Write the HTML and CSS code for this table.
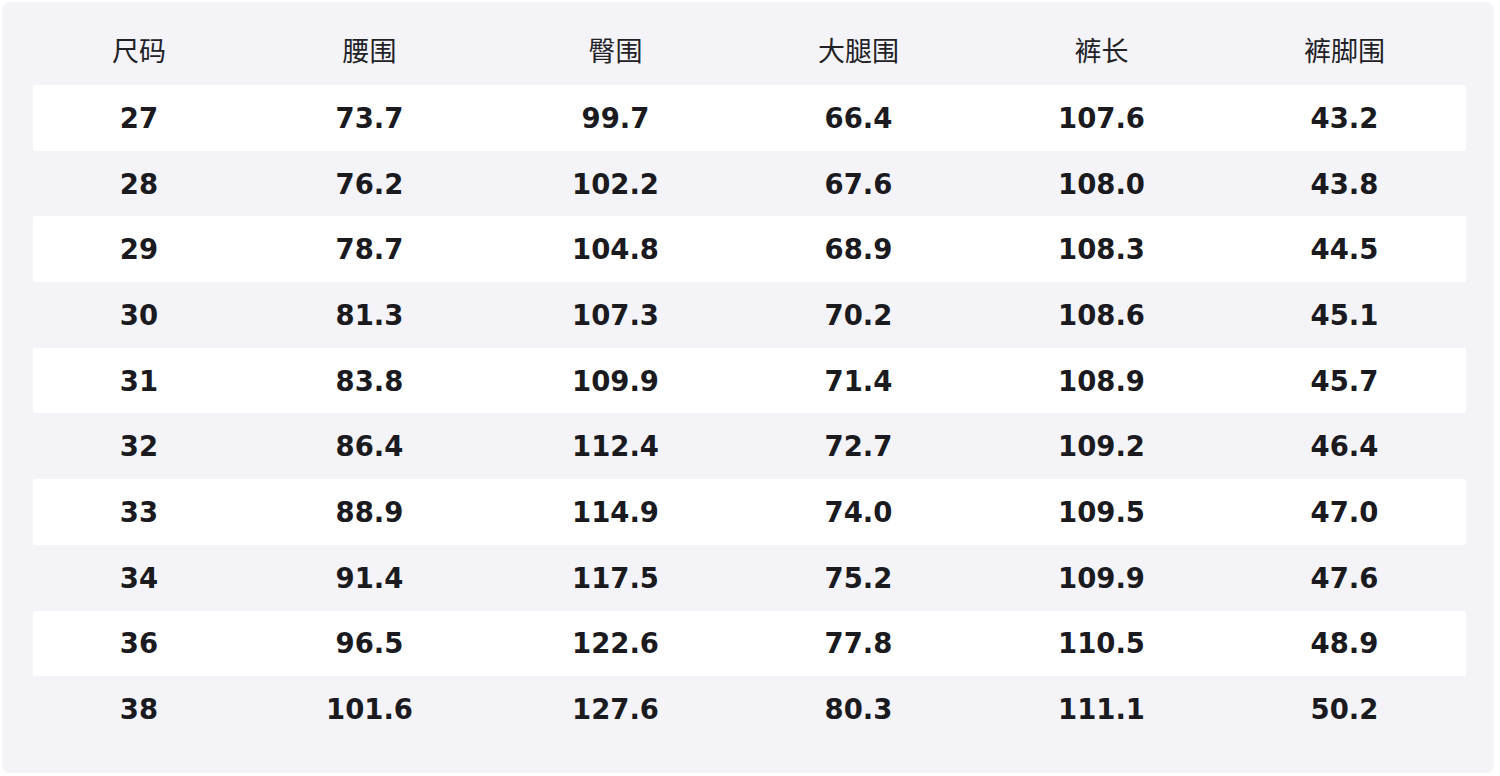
FILE: index.html
```html
<!DOCTYPE html>
<html lang="zh">
<head>
<meta charset="utf-8">
<link rel="stylesheet" href="styles.css">
</head>
<body>
<div class="panel">
  <div class="table">
    <div class="row head"><div>尺码</div><div>腰围</div><div>臀围</div><div>大腿围</div><div>裤长</div><div>裤脚围</div></div>
    <div class="row odd"><div>27</div><div>73.7</div><div>99.7</div><div>66.4</div><div>107.6</div><div>43.2</div></div>
    <div class="row"><div>28</div><div>76.2</div><div>102.2</div><div>67.6</div><div>108.0</div><div>43.8</div></div>
    <div class="row odd"><div>29</div><div>78.7</div><div>104.8</div><div>68.9</div><div>108.3</div><div>44.5</div></div>
    <div class="row"><div>30</div><div>81.3</div><div>107.3</div><div>70.2</div><div>108.6</div><div>45.1</div></div>
    <div class="row odd"><div>31</div><div>83.8</div><div>109.9</div><div>71.4</div><div>108.9</div><div>45.7</div></div>
    <div class="row"><div>32</div><div>86.4</div><div>112.4</div><div>72.7</div><div>109.2</div><div>46.4</div></div>
    <div class="row odd"><div>33</div><div>88.9</div><div>114.9</div><div>74.0</div><div>109.5</div><div>47.0</div></div>
    <div class="row"><div>34</div><div>91.4</div><div>117.5</div><div>75.2</div><div>109.9</div><div>47.6</div></div>
    <div class="row odd"><div>36</div><div>96.5</div><div>122.6</div><div>77.8</div><div>110.5</div><div>48.9</div></div>
    <div class="row"><div>38</div><div>101.6</div><div>127.6</div><div>80.3</div><div>111.1</div><div>50.2</div></div>
  </div>
</div>
</body>
</html>
```
FILE: styles.css
```css
html, body {
  margin: 0;
  padding: 0;
  background: #ffffff;
}
.panel {
  margin: 2px 0 0 2px;
  width: 1492px;
  height: 771px;
  box-sizing: border-box;
  padding: 17px 28px 0 31px;
  background: #f3f3f8;
  border-radius: 8px;
}
.table {
  display: flex;
  flex-direction: column;
}
.row {
  display: grid;
  grid-template-columns: 212px 249px 243px 243px 243px 243px;
  height: 65.7px;
  align-items: center;
  justify-items: center;
  font-family: "DejaVu Sans", sans-serif;
  font-weight: bold;
  font-size: 27.5px;
  color: #1a1a1f;
  border-radius: 2px;
}
.row.odd {
  background: #ffffff;
}
.row.head {
  height: 66px;
  box-sizing: border-box;
  padding-bottom: 6px;
  font-family: "Noto Sans CJK SC", sans-serif;
  font-weight: normal;
  font-size: 27px;
  color: #222226;
}
```
